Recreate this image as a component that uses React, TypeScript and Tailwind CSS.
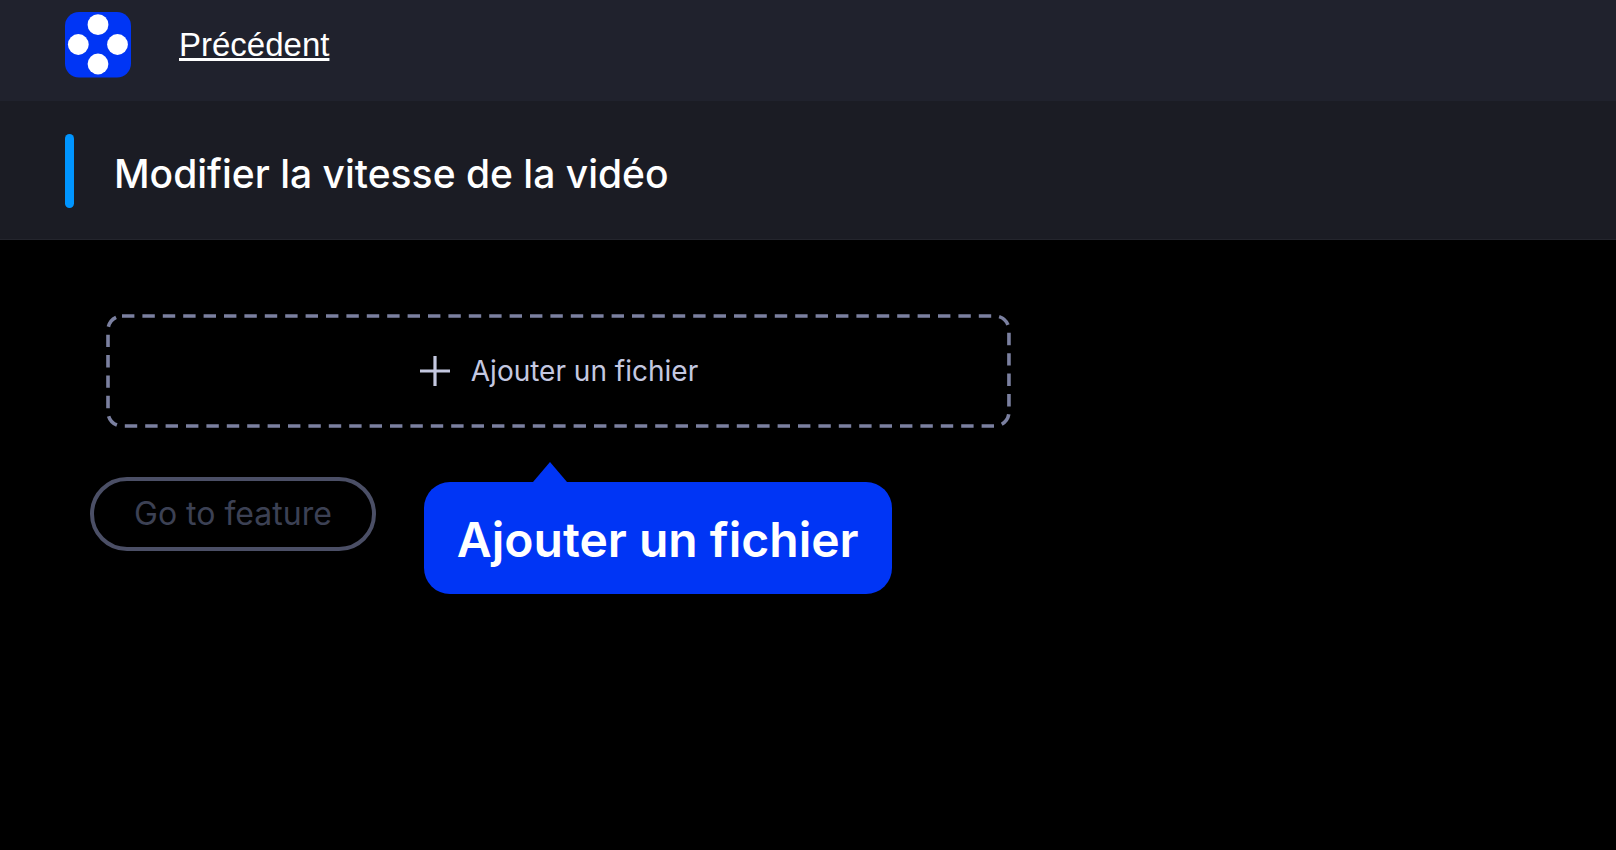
export default function App() {
  return (
    <div className="min-h-screen bg-black font-['Inter',sans-serif] text-white">
      <header className="flex h-[101px] items-start gap-12 bg-[#20222d] px-[65px] pt-3">
        <svg className="size-[66px] shrink-0" viewBox="0 0 66 66" role="img" aria-label="Logo">
          <rect width="66" height="65.5" rx="14" fill="#0035f5" />
          <circle cx="33" cy="12.7" r="10.4" fill="#fff" />
          <circle cx="13.3" cy="32.5" r="10.4" fill="#fff" />
          <circle cx="52.5" cy="32.5" r="10.4" fill="#fff" />
          <circle cx="33" cy="52" r="10.4" fill="#fff" />
        </svg>
        <a
          href="#"
          className="mt-[13px] font-['Liberation_Sans',sans-serif] text-[33px] leading-10 underline decoration-[3px] underline-offset-[2px]"
        >
          Précédent
        </a>
      </header>

      <section className="flex h-[139px] items-start gap-10 border-b border-[#24252d] bg-[#1b1c24] px-[65px] pt-[33px]">
        <div className="h-[74px] w-[9px] shrink-0 rounded-full bg-[#0095ff]" />
        <h1 className="pt-4 text-[39px] leading-[48px] font-medium">Modifier la vitesse de la vidéo</h1>
      </section>

      <main className="pt-[74px]">
        <button
          type="button"
          className="relative ml-[106px] flex h-[114px] w-[56%] items-center justify-center gap-5 text-[#c4c8e0]"
        >
          <svg className="absolute inset-0 size-full" aria-hidden="true">
            <rect
              className="h-[calc(100%-4px)] w-[calc(100%-4px)]"
              x="2"
              y="2"
              rx="14"
              fill="none"
              stroke="#7b80a0"
              strokeWidth="3.6"
              strokeDasharray="12.4 8"
            />
          </svg>
          <svg className="size-8" viewBox="0 0 32 32" aria-hidden="true">
            <path d="M16 1v30M1 16h30" stroke="currentColor" strokeWidth="3.2" />
          </svg>
          <span className="text-[28px] leading-8">Ajouter un fichier</span>
        </button>

        <div className="ml-[90px] flex items-start gap-12 pt-[49px]">
          <button
            type="button"
            disabled
            className="h-[74px] rounded-full border-4 border-[#4b4f66] px-10 text-[32px] leading-10 text-[#3c4154]"
          >
            Go to feature
          </button>
          <div role="tooltip" className="relative mt-[5px] rounded-[26px] bg-[#0035f5] px-[33px] pt-[30px] pb-[26px]">
            <svg className="absolute -top-5 left-[109px] h-5 w-[34px]" viewBox="0 0 34 20" aria-hidden="true">
              <path d="M17 0L34 20H0z" fill="#0035f5" />
            </svg>
            <p className="text-[48px] leading-[56px] font-semibold">Ajouter un fichier</p>
          </div>
        </div>
      </main>
    </div>
  );
}
